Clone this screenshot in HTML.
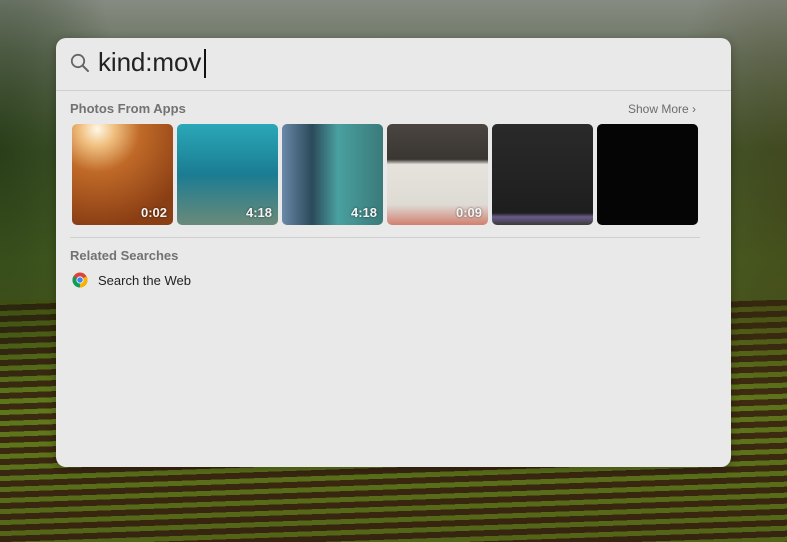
<!DOCTYPE html>
<html><head><meta charset="utf-8"><style>
*{margin:0;padding:0;box-sizing:border-box}
body{width:787px;height:542px;overflow:hidden;position:relative;font-family:"Liberation Sans",sans-serif;background:#3d4a20;}
.top{position:absolute;left:0;top:0;width:787px;height:320px;
background:linear-gradient(180deg,#868b82 0,#6d7764 50px,#44592c 150px,#4a6324 260px,#4a5a20 320px);}
.sh{position:absolute;left:0;top:0;width:787px;height:542px;
background:radial-gradient(ellipse 120px 300px at 0 150px,rgba(20,40,10,.55),rgba(0,0,0,0)),radial-gradient(ellipse 120px 300px at 787px 200px,rgba(60,50,15,.45),rgba(0,0,0,0))}
.bot{position:absolute;left:0;top:300px;width:787px;height:242px;
background:repeating-linear-gradient(178deg,#647e1c 0 5px,#3e2a12 5px 11px);}
.dk{position:absolute;left:0;top:300px;width:787px;height:242px;background:linear-gradient(180deg,rgba(30,25,10,.35),rgba(0,0,0,0) 40%,rgba(30,20,8,.25))}
.panel{position:absolute;left:56px;top:38px;width:675px;height:429px;background:#e9e9e9;border-radius:10px;box-shadow:0 2px 10px rgba(0,0,0,.3)}
.q{position:absolute;left:42px;top:9px;font-size:26px;color:#222;letter-spacing:-.1px}
.caret{position:absolute;left:148px;top:11px;width:1.5px;height:29px;background:#111}
.hr1{position:absolute;left:0;right:0;top:52px;height:1px;background:#cfcfcf}
.h{position:absolute;font-size:13px;font-weight:bold;color:#727272}
.sm{position:absolute;left:572px;top:64px;font-size:12px;color:#6c6c6c}
.th{position:absolute;top:86px;width:101px;height:101px;border-radius:5px;overflow:hidden}
.th span{position:absolute;right:6px;bottom:5px;color:#f4f4f4;font-weight:bold;font-size:13px;text-shadow:0 0 2px rgba(0,0,0,.6)}
.hr2{position:absolute;left:14px;width:630px;top:199px;height:1px;background:#cfcfcf}
.web{position:absolute;left:42px;top:235px;font-size:13px;color:#222}
</style></head><body>
<div class="top"></div><div class="bot"></div><div class="dk"></div><div class="sh"></div>
<div class="panel">
<svg style="position:absolute;left:14px;top:15px" width="20" height="20" viewBox="0 0 20 20"><circle cx="8" cy="8" r="6.2" fill="none" stroke="#666" stroke-width="1.8"/><line x1="12.5" y1="12.5" x2="18" y2="18" stroke="#666" stroke-width="2" stroke-linecap="round"/></svg>
<div class="q">kind:mov</div><div class="caret"></div>
<div class="hr1"></div>
<div class="h" style="left:14px;top:63px">Photos From Apps</div>
<div class="sm">Show More &#8250;</div>
<div class="th" style="left:16px;background:radial-gradient(circle at 25% 5%,#fff8e8 0,#f0c080 14%,#c06a28 35%,#8a3e14 80%)"><span>0:02</span></div>
<div class="th" style="left:121px;background:linear-gradient(180deg,#2aa8b8,#1b7c92 50%,#6a8a7a)"><span>4:18</span></div>
<div class="th" style="left:226px;background:linear-gradient(90deg,#6a88a8,#2a4a5a 30%,#4aa0a0 55%,#3a7a7a)"><span>4:18</span></div>
<div class="th" style="left:331px;background:linear-gradient(180deg,#4a4540 0,#3a3632 35%,#e6e2dc 40%,#dedad4 80%,#d08070)"><span>0:09</span></div>
<div class="th" style="left:436px;background:linear-gradient(180deg,#2a2a2a,#1e1e1e 88%,#6a5a8a 92%,#3a3a3a)"></div>
<div class="th" style="left:541px;background:#050505"></div>
<div class="hr2"></div>
<div class="h" style="left:14px;top:210px">Related Searches</div>
<svg style="position:absolute;left:16px;top:234px" width="16" height="16" viewBox="0 0 16 16">
<circle cx="8" cy="8" r="7.5" fill="#db4437"/>
<path d="M8 8 L1.5 4.25 A7.5 7.5 0 0 0 8 15.5 Z" fill="#0f9d58"/>
<path d="M8 8 L8 15.5 A7.5 7.5 0 0 0 14.5 4.25 Z" fill="#f4b400"/>
<circle cx="8" cy="8" r="3.6" fill="#fff"/><circle cx="8" cy="8" r="2.8" fill="#4285f4"/></svg>
<div class="web">Search the Web</div>
</div>
</body></html>
